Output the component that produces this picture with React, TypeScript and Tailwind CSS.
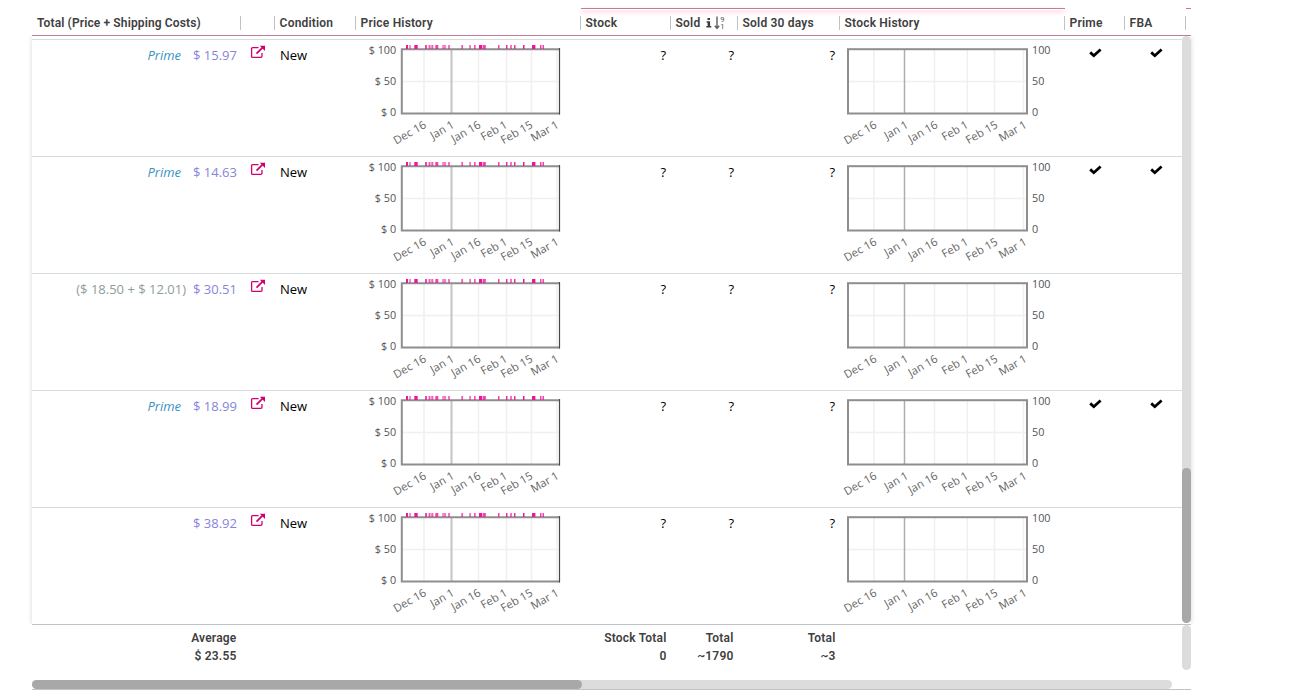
import { clsx } from "clsx";

type Offer = {
  prime: boolean;
  breakdown?: string;
  total: string;
};

const OFFERS: Offer[] = [
  { prime: true, total: "$ 15.97" },
  { prime: true, total: "$ 14.63" },
  { prime: false, breakdown: "($ 18.50 + $ 12.01)", total: "$ 30.51" },
  { prime: true, total: "$ 18.99" },
  { prime: false, total: "$ 38.92" },
];

// column widths shared by header, rows and totals
const COL = {
  total: "w-[208px] shrink-0",
  link: "w-[34px] shrink-0",
  condition: "w-[81px] shrink-0",
  price: "w-[225px] shrink-0",
  stock: "w-[90px] shrink-0",
  sold: "w-[67px] shrink-0",
  sold30: "w-[102px] shrink-0",
  history: "w-[225px] shrink-0",
  prime: "w-[60px] shrink-0",
  fba: "w-[61px] shrink-0",
};

const DATES = ["Dec 16", "Jan 1", "Jan 16", "Feb 1", "Feb 15", "Mar 1"];

// [x, width, opacity] of each marker above the price chart
const MARKERS = [
  [50, 2, 1], [53, 2, 0.5], [58.3, 3.4, 1], [69, 2, 0.8], [72.5, 2, 0.7],
  [75.3, 2, 0.7], [79.3, 3, 0.8], [86.2, 4, 0.55], [92, 2, 0.6], [105.3, 1.8, 0.7],
  [113.2, 1.8, 0.6], [118, 1.7, 0.7], [123, 3, 1], [126.6, 3.2, 0.8], [142, 1.5, 0.8],
  [150, 1.5, 0.9], [154, 2, 0.6], [158, 1.5, 0.9], [167, 1.5, 1], [176, 3.4, 1],
  [184, 1.5, 0.8], [186.5, 1.5, 0.8],
];

function AxisDates({ xs }: { xs: number[] }) {
  return (
    <g fill="#666" fontSize="11.2" textAnchor="end">
      {DATES.map((d, i) => (
        <text key={d} transform={`translate(${xs[i]} 87) rotate(-30)`}>
          {d}
        </text>
      ))}
    </g>
  );
}

function PriceChart() {
  return (
    <svg width="225" height="116" viewBox="-1 0 225 116" className="block font-['Open_Sans',sans-serif]">
      <g stroke="#f0f0f0" strokeWidth="1.5">
        <path d="M68 10V73M122.5 10V73M150.5 10V73M175.5 10V73M201 10V73M46 41.5H204" />
        <path d="M95.5 10V73" stroke="#c4c4c4" strokeWidth="2" />
      </g>
      <path d="M204 9.2H45.8V73.5H204" fill="none" stroke="#8e8e8e" strokeWidth="2" />
      <path d="M203.5 8V74.5" stroke="#484848" strokeWidth="1.2" />
      {MARKERS.map(([x, w, o]) => (
        <rect key={x} x={x} y="5" width={w} height="4" fill="#f0149b" opacity={o} />
      ))}
      <g fill="#545454" fontSize="10.8" textAnchor="end">
        <text x="40.2" y="14">$ 100</text>
        <text x="40.2" y="45">$ 50</text>
        <text x="40.2" y="76">$ 0</text>
      </g>
      <AxisDates xs={[71, 99, 125.5, 152, 177.5, 203.5]} />
    </svg>
  );
}

function StockChart() {
  return (
    <svg width="225" height="116" viewBox="-1 0 225 116" className="block overflow-visible font-['Open_Sans',sans-serif]">
      <g stroke="#f0f0f0" strokeWidth="1.5">
        <path d="M34 10V73M94.5 10V73M127.3 10V73M154.5 10V73M183.5 10V73M9 41.5H187" />
        <path d="M64.5 10V73" stroke="#adadad" />
      </g>
      <rect x="8" y="9.2" width="179" height="64.3" fill="none" stroke="#8e8e8e" strokeWidth="2" />
      <g fill="#545454" fontSize="10.8">
        <text x="192" y="14">100</text>
        <text x="192" y="45">50</text>
        <text x="192" y="76">0</text>
      </g>
      <AxisDates xs={[37.5, 69, 98.5, 129, 158.5, 187.5]} />
    </svg>
  );
}

function LinkIcon() {
  return (
    <svg width="16" height="14" viewBox="0 0 16 14" fill="none" stroke="#d1006f" strokeWidth="1.3">
      <path d="M8.5 2.6H2.6Q1.6 2.6 1.6 3.6V11.4Q1.6 12.4 2.6 12.4H10.9Q12 12.4 12 11.3V8" />
      <path d="M6.5 8.6L13 2.2" strokeWidth="1.7" />
      <path d="M9.8 .8H15V6Z" fill="#d1006f" stroke="none" />
    </svg>
  );
}

function Check() {
  return (
    <svg width="13" height="10" viewBox="0 0 13 10" fill="none" stroke="#000" strokeWidth="2.8">
      <path d="M1.2 4.4L4.8 7.7L11.6 1.5" />
    </svg>
  );
}

function SortIcon() {
  return (
    <svg width="12" height="14" viewBox="0 0 12 14" fill="none" stroke="#606060" strokeWidth="1.4" className="ml-[2px]">
      <path d="M3 .5V12M.8 9.7L3 12.3L5.2 9.7" />
      <g fill="#555" stroke="none" fontSize="7.5" fontWeight="400">
        <text x="6.2" y="6.2">9</text>
        <text x="6.2" y="13">1</text>
      </g>
    </svg>
  );
}

function InfoIcon() {
  return (
    <svg width="6" height="10" viewBox="0 0 6 10" fill="#3c3c3c" className="ml-[6px]">
      <path d="M1.5 0H4V2H1.5ZM.6 3.3H4.1V8H5.3V9.6H.4V8H1.6V4.8H.6Z" />
    </svg>
  );
}

function HeadCell({ width, children }: { width: string; children?: React.ReactNode }) {
  return (
    <div className={clsx(width, "flex h-[14px] items-center border-l border-[#bdc3c7] pl-[4.6px] whitespace-nowrap")}>
      {children}
    </div>
  );
}

function OfferRow({ offer }: { offer: Offer }) {
  return (
    <div className="flex h-[117px] shrink-0 border-b border-[#d9dcde] text-[13px] leading-5">
      <div className={clsx(COL.total, "flex justify-end gap-[7px] pt-[5px] pr-[3px] whitespace-nowrap")}>
        {offer.prime && <span className="mr-[5px] text-[#3a93c2] italic">Prime</span>}
        {offer.breakdown && <span className="text-[#8e9c9c]">{offer.breakdown}</span>}
        <span className="text-[#8784dc]">{offer.total}</span>
      </div>
      <div className={clsx(COL.link, "pt-[5px] pl-[10px]")}>
        <LinkIcon />
      </div>
      <div className={clsx(COL.condition, "pt-[5px] pl-[6px] text-black")}>New</div>
      <div className={COL.price}>
        <PriceChart />
      </div>
      <div className={clsx(COL.stock, "pt-[5px] pr-1 text-right")}>?</div>
      <div className={clsx(COL.sold, "pt-[5px] pr-[3px] text-right")}>?</div>
      <div className={clsx(COL.sold30, "pt-[5px] pr-1 text-right")}>?</div>
      <div className={COL.history}>
        <StockChart />
      </div>
      <div className={clsx(COL.prime, "pt-[8px] pl-[25px]")}>{offer.prime && <Check />}</div>
      <div className={clsx(COL.fba, "pt-[8px] pl-[26px]")}>{offer.prime && <Check />}</div>
    </div>
  );
}

function Total({ width, label, value }: { width: string; label: string; value: string }) {
  return (
    <div className={clsx(width, "pr-[3.5px] text-right whitespace-nowrap")}>
      <div>{label}</div>
      <div>{value}</div>
    </div>
  );
}

export default function App() {
  return (
    <div className="flex h-[690px] w-[1295px] flex-col overflow-hidden bg-white pl-8 font-['Open_Sans',sans-serif] text-black">
      <div className="flex h-[10px] w-[1159px] items-end">
        <div className="ml-[549px] h-[2px] w-[484px] border-t border-[#c07d95] shadow-[0_2px_4px_#ffc0dc]" />
        <div className="ml-[121px] h-[2px] w-[5px] border-t border-[#c07d95]" />
      </div>

      <div className="flex h-[26px] w-[1159px] border-b border-[#c07d95] pt-[6px] font-['Roboto',sans-serif] text-xs font-semibold tracking-[0.2px] text-[#404040]">
        <div className={clsx(COL.total, "flex h-[14px] items-center pl-[5px] tracking-[0.13px] whitespace-nowrap")}>
          Total (Price + Shipping Costs)
        </div>
        <HeadCell width={COL.link} />
        <HeadCell width={COL.condition}>Condition</HeadCell>
        <HeadCell width={COL.price}>Price History</HeadCell>
        <HeadCell width={COL.stock}>Stock</HeadCell>
        <HeadCell width={COL.sold}>
          Sold
          <InfoIcon />
          <SortIcon />
        </HeadCell>
        <HeadCell width={COL.sold30}>Sold 30 days</HeadCell>
        <HeadCell width={COL.history}>Stock History</HeadCell>
        <HeadCell width={COL.prime}>Prime</HeadCell>
        <HeadCell width={COL.fba}>FBA</HeadCell>
        <div className="h-[14px] border-l border-[#bdc3c7]" />
      </div>

      <div className="flex h-[588px] w-[1159px] shadow-[0_5px_6px_-3px_#0002,0_0_5px_#0002] [clip-path:inset(0_-8px_0_-8px)]">
        <div className="flex w-[1150px] flex-col overflow-hidden pt-[3px]">
          <div className="h-px shrink-0 bg-[#d9dcde]" />
          {OFFERS.map((offer) => (
            <OfferRow key={offer.total} offer={offer} />
          ))}
        </div>
        <div className="flex h-[587px] w-[9px] flex-col justify-end rounded-full bg-[#dcdcdc]">
          <div className="h-[155px] rounded-full bg-[#a8a8a8]" />
        </div>
      </div>

      <div className="flex h-[55px] w-[1159px] border-t border-[#bdc3c7]">
        <div className="flex w-[1150px] pt-1 font-['Roboto',sans-serif] text-xs leading-[18px] font-semibold tracking-[0.2px] text-[#404040]">
          <Total width={COL.total} label="Average" value="$ 23.55" />
          <div className="w-[340px]" />
          <Total width={COL.stock} label="Stock Total" value="0" />
          <Total width={COL.sold} label="Total" value="~1790" />
          <Total width={COL.sold30} label="Total" value="~3" />
        </div>
        <div className="h-[45px] w-[9px] rounded-full bg-[#dcdcdc]" />
      </div>

      <div className="flex h-[11px] w-[1159px] border-b border-[#bdc3c7] pt-px">
        <div className="h-[9px] w-[1140px] rounded-full bg-[#dcdcdc]">
          <div className="h-[9px] w-[550px] rounded-full bg-[#a8a8a8]" />
        </div>
      </div>
    </div>
  );
}
